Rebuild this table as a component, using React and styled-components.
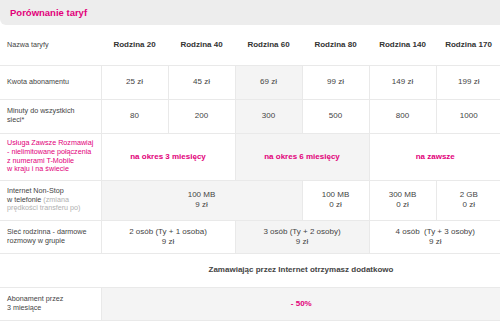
import React from "react";
import styled, { createGlobalStyle } from "styled-components";

const PINK = "#e2007a";

const GlobalStyle = createGlobalStyle`
  html, body {
    margin: 0;
    padding: 0;
    background: #fff;
  }
  body {
    font-family: "Liberation Sans", Arial, sans-serif;
    color: #444;
    overflow: hidden;
  }
`;

const Page = styled.div`
  width: 500px;
`;

// Szary pasek z tytułem
const TitleBar = styled.div`
  height: 25px;
  display: flex;
  align-items: center;
  padding-left: 10px;
  background: #ededed;
  border-bottom-left-radius: 6px;
`;

const Title = styled.h2`
  margin: 0;
  font-size: 9.5px;
  font-weight: bold;
  color: ${PINK};
`;

const Table = styled.table`
  width: 501px;
  table-layout: fixed;
  border-collapse: collapse;
`;

const Row = styled.tr`
  height: ${(p) => p.$h}px;
  border-bottom: 1px solid #e9e9e9;
`;

const HeadCell = styled.th`
  padding: 0;
  font-size: 8px;
  font-weight: bold;
  color: #333;
  text-align: center;
  vertical-align: middle;
`;

const HeadLabel = styled.th`
  padding: 0 0 0 7px;
  font-size: 7.2px;
  font-weight: normal;
  color: #444;
  text-align: left;
  vertical-align: middle;
`;

const LabelCell = styled.td`
  padding: 0 4px 0 7px;
  font-size: 7.2px;
  line-height: 8.7px;
  color: ${(p) => (p.$accent ? PINK : "#444")};
  border-right: ${(p) => (p.$plain ? "none" : "1px solid #e9e9e9")};
  vertical-align: middle;
  text-align: left;
`;

const ValueCell = styled.td`
  padding: 0;
  font-size: 8px;
  line-height: 9.6px;
  text-align: center;
  vertical-align: middle;
  color: ${(p) => (p.$accent ? PINK : "#444")};
  font-weight: ${(p) => (p.$accent || p.$strong ? "bold" : "normal")};
  background: ${(p) => (p.$shade ? "#f4f4f4" : "#fff")};
  border-right: ${(p) => (p.$plain ? "none" : "1px solid #e9e9e9")};

  &:last-child {
    border-right: none;
  }
`;

const Hint = styled.span`
  color: #b0b0b0;
`;

const Col = styled.col`
  width: ${(p) => p.$w}px;
`;

const plans = ["Rodzina 20", "Rodzina 40", "Rodzina 60", "Rodzina 80", "Rodzina 140", "Rodzina 170"];
const fees = ["25 zł", "45 zł", "69 zł", "99 zł", "149 zł", "199 zł"];
const minutes = ["80", "200", "300", "500", "800", "1000"];

const App = () => (
  <Page>
    <GlobalStyle />
    <TitleBar>
      <Title>Porównanie taryf</Title>
    </TitleBar>
    <Table>
      <colgroup>
        <Col $w={101} />
        {plans.map((p, i) => (
          <Col key={p} $w={i === 5 ? 65 : 67} />
        ))}
      </colgroup>
      <thead>
        <Row $h={40}>
          <HeadLabel>Nazwa taryfy</HeadLabel>
          {plans.map((p) => (
            <HeadCell key={p}>{p}</HeadCell>
          ))}
        </Row>
      </thead>
      <tbody>
        <Row $h={34}>
          <LabelCell>Kwota abonamentu</LabelCell>
          {fees.map((f, i) => (
            <ValueCell key={f} $shade={i === 2}>{f}</ValueCell>
          ))}
        </Row>
        <Row $h={34}>
          <LabelCell>
            Minuty do wszystkich
            <br />
            sieci*
          </LabelCell>
          {minutes.map((m, i) => (
            <ValueCell key={m} $shade={i === 2}>{m}</ValueCell>
          ))}
        </Row>
        <Row $h={47}>
          <LabelCell $accent>
            Usługa Zawsze Rozmawiaj
            <br />
            - nielimitowane połączenia
            <br />
            z numerami T-Mobile
            <br />w kraju i na świecie
          </LabelCell>
          <ValueCell colSpan={2} $accent>na okres 3 miesięcy</ValueCell>
          <ValueCell colSpan={2} $accent $shade>na okres 6 miesięcy</ValueCell>
          <ValueCell colSpan={2} $accent>na zawsze</ValueCell>
        </Row>
        <Row $h={40}>
          <LabelCell>
            Internet Non-Stop
            <br />w telefonie <Hint>(zmiana</Hint>
            <br />
            <Hint>prędkości transferu po)</Hint>
          </LabelCell>
          <ValueCell colSpan={3} $shade>
            100 MB
            <br />9 zł
          </ValueCell>
          <ValueCell>
            100 MB
            <br />0 zł
          </ValueCell>
          <ValueCell>
            300 MB
            <br />0 zł
          </ValueCell>
          <ValueCell>
            2 GB
            <br />0 zł
          </ValueCell>
        </Row>
        <Row $h={33}>
          <LabelCell>
            Sieć rodzinna - darmowe
            <br />
            rozmowy w grupie
          </LabelCell>
          <ValueCell colSpan={2}>
            2 osób (Ty + 1 osoba)
            <br />9 zł
          </ValueCell>
          <ValueCell colSpan={2} $shade>
            3 osób (Ty + 2 osoby)
            <br />9 zł
          </ValueCell>
          <ValueCell colSpan={2}>
            4 osób&nbsp; (Ty + 3 osoby)
            <br />9 zł
          </ValueCell>
        </Row>
        <Row $h={34}>
          <LabelCell $plain />
          <ValueCell colSpan={6} $strong $plain>
            Zamawiając przez Internet otrzymasz dodatkowo
          </ValueCell>
        </Row>
        <Row $h={33}>
          <LabelCell>
            Abonament przez
            <br />3 miesiące
          </LabelCell>
          <ValueCell colSpan={6} $accent $shade>- 50%</ValueCell>
        </Row>
      </tbody>
    </Table>
  </Page>
);

export default App;
